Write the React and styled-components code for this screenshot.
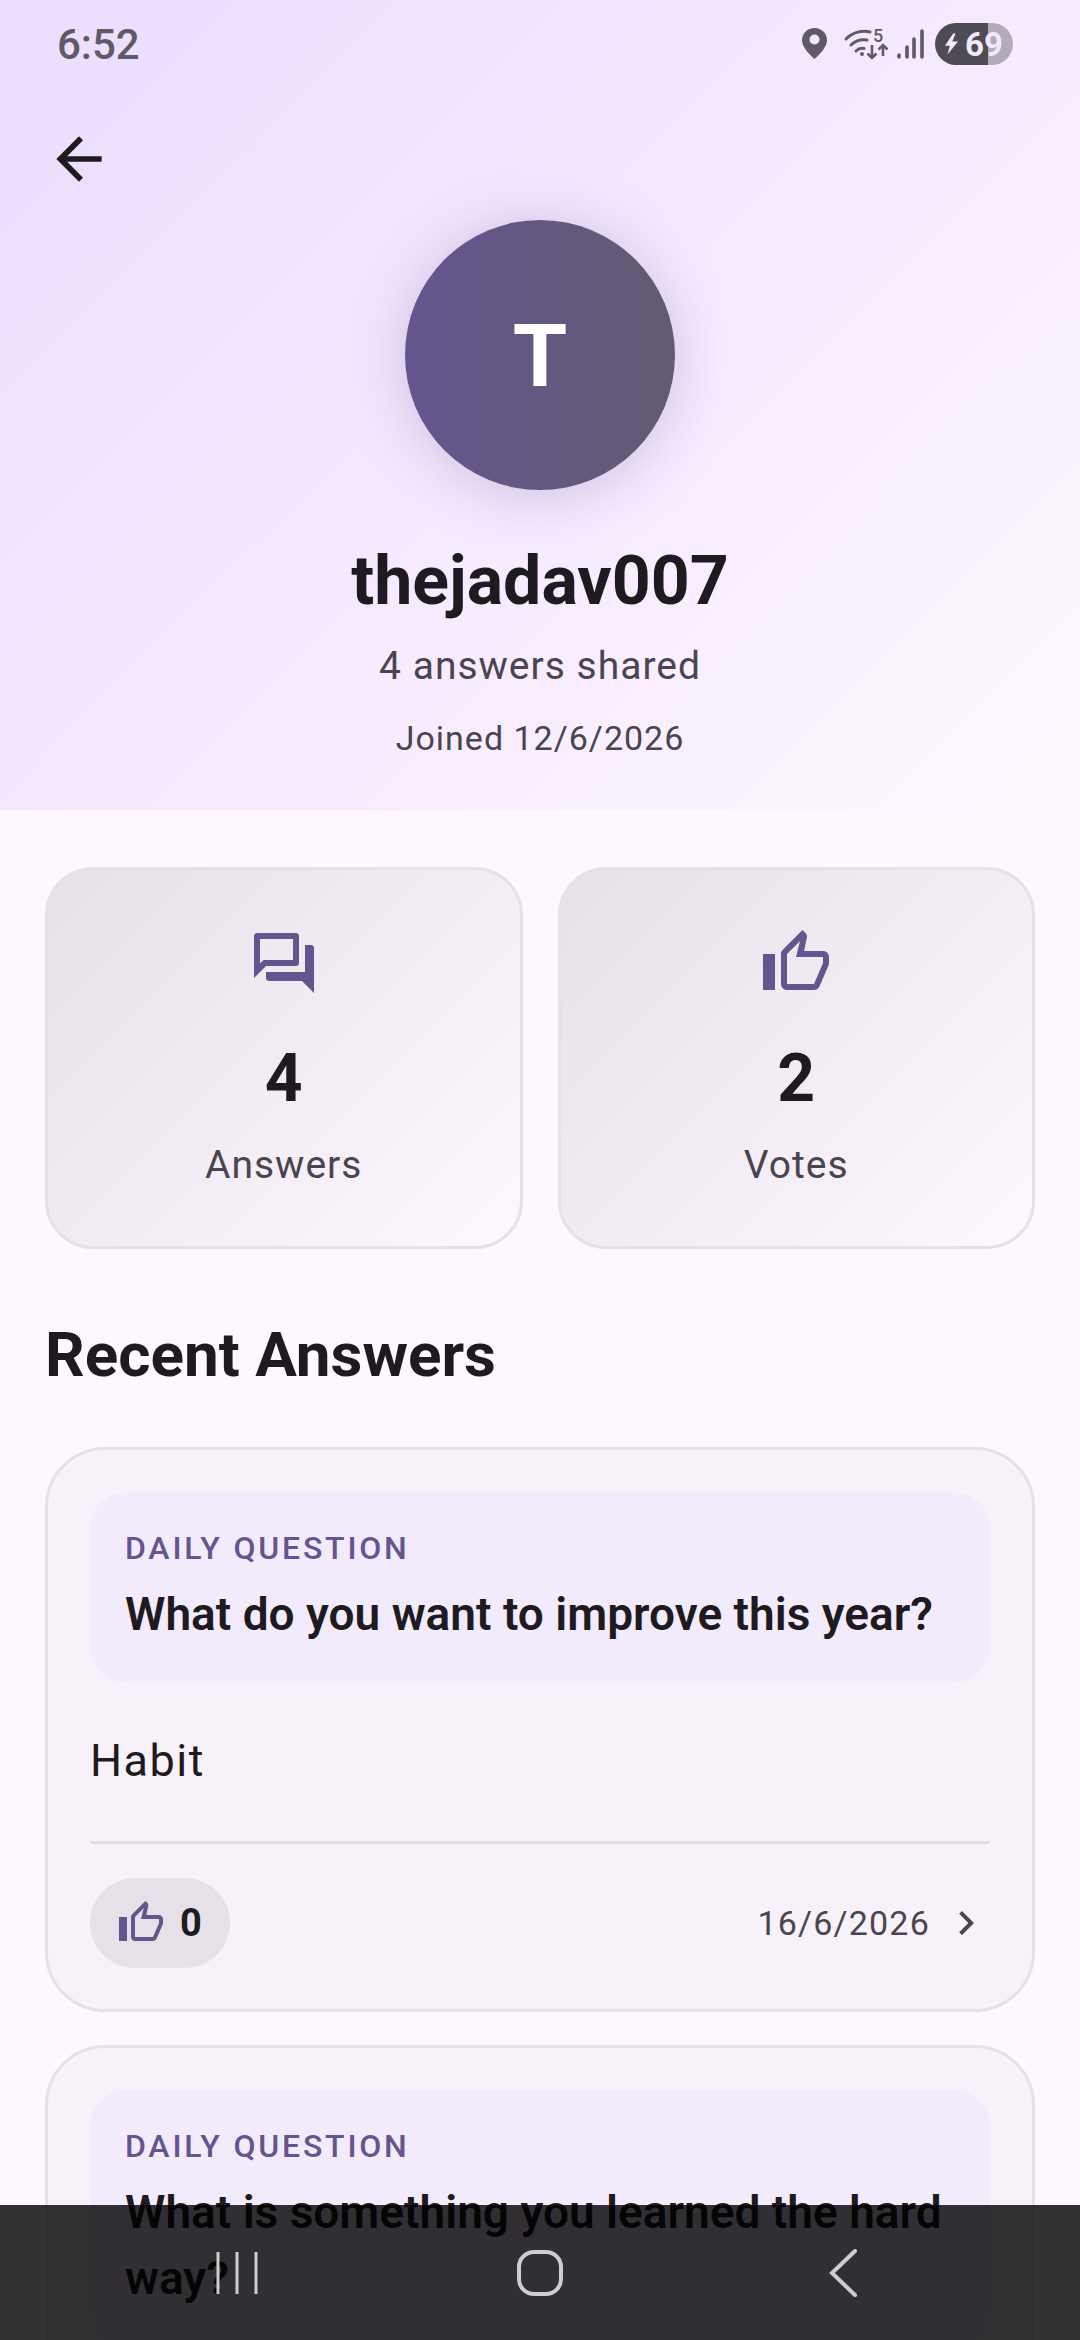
import React from "react";
import styled, { createGlobalStyle } from "styled-components";

const GlobalStyle = createGlobalStyle`
  html, body {
    margin: 0;
    padding: 0;
    background: #fef7ff;
    font-family: Roboto, "Noto Sans", sans-serif;
  }
`;

const answers = [
  { question: "What do you want to improve this year?", answer: "Habit", votes: 0, date: "16/6/2026" },
  { question: "What is something you learned the hard way?" },
];

const ForumIcon = ({ size = 72 }) => (
  <svg width={size} height={size} viewBox="0 0 24 24" fill="#65558f">
    <path d="M15 4v7H5.17L4 12.17V4h11m1-2H3c-.55 0-1 .45-1 1v14l4-4h10c.55 0 1-.45 1-1V3c0-.55-.45-1-1-1zm5 4h-2v9H6v2c0 .55.45 1 1 1h11l4 4V7c0-.55-.45-1-1-1z" />
  </svg>
);

const ThumbIcon = ({ size = 72 }) => (
  <svg width={size} height={size} viewBox="0 0 24 24" fill="#65558f">
    <path d="M9 21h9c.83 0 1.54-.5 1.84-1.22l3.02-7.05c.09-.23.14-.47.14-.73v-2c0-1.1-.9-2-2-2h-6.31l.95-4.57.03-.32c0-.41-.17-.79-.44-1.06L14.17 1 7.58 7.59C7.22 7.95 7 8.45 7 9v10c0 1.1.9 2 2 2zM9 9l4.34-4.34L12 10h9v2l-3 7H9V9zM1 9h4v12H1z" />
  </svg>
);

const BackArrow = () => (
  <svg width="68" height="68" viewBox="0 0 24 24" fill="#1d1b20">
    <path d="M20 11H7.83l5.59-5.59L12 4l-8 8 8 8 1.41-1.41L7.83 13H20v-2z" />
  </svg>
);

const Chevron = () => (
  <svg width="48" height="48" viewBox="0 0 24 24" fill="#49454f">
    <path d="M10 6L8.59 7.41 13.17 12l-4.58 4.59L10 18l6-6z" />
  </svg>
);

const StatusIcons = () => (
  <svg width="125" height="42" viewBox="0 0 125 42" fill="none">
    {/* location pin */}
    <path d="M12.5 5C5.6 5 0 10.4 0 17.2 0 25.6 12.5 36 12.5 36S25 25.6 25 17.2C25 10.4 19.4 5 12.5 5z" fill="#5f5a66" />
    <circle cx="12.5" cy="16.5" r="5" fill="#f2e8fe" />
    {/* wifi arcs */}
    <g stroke="#5f5a66" strokeWidth="3" strokeLinecap="round">
      <path d="M44 16c6-6 15-9 24-7" />
      <path d="M49 22c4-4 10-6 16-5" />
      <path d="M54 28c2-2 5-3 8-2.5" />
    </g>
    <circle cx="60" cy="31" r="2" fill="#5f5a66" />
    <text x="71" y="19" fontFamily="Roboto, sans-serif" fontSize="18" fontWeight="500" fill="#5f5a66">5</text>
    <g stroke="#5f5a66" strokeWidth="2.6">
      <path d="M70 22v13M65.5 30.5l4.5 4.5 4.500-4.500" />
      <path d="M81 33V22M76.5 26.5l4.5-4.500 4.500 4.500" />
    </g>
    {/* signal bars */}
    <g stroke="#5f5a66" strokeWidth="3.6" strokeLinecap="round">
      <path d="M97 32v2" />
      <path d="M105 24v10" />
      <path d="M112 16v18" />
      <path d="M120 8v26" />
    </g>
  </svg>
);

const Battery = () => (
  <BatteryPill>
    <svg width="13" height="22" viewBox="0 0 16 26" fill="#f2e8fe">
      <path d="M10 0L0 15h6l-3 11 13-16H9l4-10z" />
    </svg>
    <BatteryLevel>69</BatteryLevel>
  </BatteryPill>
);

const NavRecents = () => (
  <svg width="44" height="46" viewBox="0 0 44 46" stroke="#cfcdcf" strokeWidth="3">
    <path d="M3 2v42M22 2v42M41 2v42" />
  </svg>
);

const NavHome = () => (
  <svg width="48" height="48" viewBox="0 0 48 48" fill="none" stroke="#cfcdcf" strokeWidth="4">
    <rect x="3" y="3" width="42" height="42" rx="15" />
  </svg>
);

const NavBack = () => (
  <svg width="30" height="48" viewBox="0 0 30 48" fill="none" stroke="#cfcdcf" strokeWidth="4" strokeLinecap="round">
    <path d="M27 2L4 24l23 22" />
  </svg>
);

const AnswerCard = ({ item }) => (
  <Card>
    <QuestionBox>
      <QuestionLabel>DAILY QUESTION</QuestionLabel>
      <QuestionText>{item.question}</QuestionText>
    </QuestionBox>
    {item.answer && (
      <>
        <AnswerText>{item.answer}</AnswerText>
        <Divider />
        <CardFooter>
          <VotePill>
            <ThumbIcon size={48} />
            <VoteCount>{item.votes}</VoteCount>
          </VotePill>
          <DateLink>
            <DateText>{item.date}</DateText>
            <Chevron />
          </DateLink>
        </CardFooter>
      </>
    )}
  </Card>
);

export default function App() {
  return (
    <Screen>
      <GlobalStyle />
      <Header>
        <StatusBar>
          <StatusTime>6:52</StatusTime>
          <StatusRight>
            <StatusIcons />
            <Battery />
          </StatusRight>
        </StatusBar>
        <BackRow>
          <BackArrow />
        </BackRow>
        <Avatar>T</Avatar>
        <UserName>thejadav007</UserName>
        <SubLine>4 answers shared</SubLine>
        <JoinLine>Joined 12/6/2026</JoinLine>
      </Header>

      <StatsRow>
        <StatCard>
          <ForumIcon />
          <StatValue>4</StatValue>
          <StatLabel>Answers</StatLabel>
        </StatCard>
        <StatCard>
          <ThumbIcon />
          <StatValue>2</StatValue>
          <StatLabel>Votes</StatLabel>
        </StatCard>
      </StatsRow>

      <SectionTitle>Recent Answers</SectionTitle>
      <CardList>
        {answers.map((item) => (
          <AnswerCard key={item.question} item={item} />
        ))}
      </CardList>

      <NavBar>
        <NavRecents />
        <NavHome />
        <NavBack />
      </NavBar>
    </Screen>
  );
}

const Screen = styled.div`
  position: relative;
  width: 1080px;
  height: 2340px;
  overflow: hidden;
  background: #fef7ff;
`;

const Header = styled.header`
  height: 810px;
  display: flex;
  flex-direction: column;
  align-items: center;
  background: linear-gradient(135deg, #eaddff 0%, #f4e8ff 45%, #fef7ff 100%);
`;

const StatusBar = styled.div`
  width: 100%;
  height: 88px;
  box-sizing: border-box;
  padding: 0 67px 0 57px;
  display: flex;
  align-items: center;
  justify-content: space-between;
`;

const StatusTime = styled.span`
  font-size: 42px;
  font-weight: 500;
  color: #5f5a66;
`;

const StatusRight = styled.div`
  display: flex;
  align-items: center;
  gap: 8px;
`;

const BatteryPill = styled.div`
  width: 78px;
  height: 42px;
  box-sizing: border-box;
  padding-left: 10px;
  border-radius: 21px;
  display: flex;
  align-items: center;
  gap: 7px;
  background: linear-gradient(90deg, #4f4b54 0 68%, #b3abbb 68% 100%);
`;

const BatteryLevel = styled.span`
  font-size: 33px;
  font-weight: 700;
  color: #f2e8fe;
`;

const BackRow = styled.div`
  width: 100%;
  height: 132px;
  box-sizing: border-box;
  padding: 37px 0 0 45px;
`;

const Avatar = styled.div`
  width: 270px;
  height: 270px;
  flex-shrink: 0;
  border-radius: 50%;
  display: flex;
  align-items: center;
  justify-content: center;
  background: linear-gradient(90deg, #65558f 0%, #625b71 100%);
  box-shadow: 0 6px 60px rgba(101, 85, 143, 0.28);
  font-size: 88px;
  font-weight: 700;
  color: #ffffff;
`;

const UserName = styled.h1`
  margin: 49px 0 0;
  font-size: 68px;
  line-height: 84px;
  font-weight: 700;
  color: #1d1b20;
`;

const SubLine = styled.p`
  margin: 18px 0 0;
  font-size: 39px;
  line-height: 50px;
  letter-spacing: 1px;
  color: #49454f;
`;

const JoinLine = styled.p`
  margin: 25px 0 0;
  font-size: 34px;
  line-height: 44px;
  letter-spacing: 1px;
  color: #49454f;
`;

const StatsRow = styled.section`
  padding: 57px 45px 0;
  display: grid;
  grid-template-columns: 1fr 1fr;
  gap: 35px;
`;

const StatCard = styled.div`
  height: 382px;
  box-sizing: border-box;
  padding-top: 57px;
  border: 3px solid #e6e0e9;
  border-radius: 48px;
  display: flex;
  flex-direction: column;
  align-items: center;
  background: linear-gradient(135deg, #e6e0e9 0%, #fef7ff 100%);
`;

const StatValue = styled.div`
  margin-top: 40px;
  font-size: 66px;
  line-height: 80px;
  font-weight: 700;
  color: #1d1b20;
`;

const StatLabel = styled.div`
  margin-top: 21px;
  font-size: 39px;
  line-height: 50px;
  letter-spacing: 1px;
  color: #49454f;
`;

const SectionTitle = styled.h2`
  margin: 66px 45px 0;
  font-size: 62px;
  line-height: 80px;
  font-weight: 700;
  color: #1d1b20;
`;

const CardList = styled.div`
  margin-top: 52px;
  padding: 0 45px;
  display: flex;
  flex-direction: column;
  gap: 33px;
`;

const Card = styled.article`
  box-sizing: border-box;
  padding: 42px 42px 41px;
  border: 3px solid #e6e0e9;
  border-radius: 60px;
  background: #f7f2fa;
`;

const QuestionBox = styled.div`
  padding: 36px 35px 36px;
  border-radius: 36px;
  background: #f2ebfc;
`;

const QuestionLabel = styled.div`
  font-size: 32px;
  line-height: 40px;
  font-weight: 500;
  letter-spacing: 2.8px;
  color: #65558f;
`;

const QuestionText = styled.div`
  margin-top: 13px;
  font-size: 46px;
  line-height: 66px;
  font-weight: 600;
  color: #1d1b20;
`;

const AnswerText = styled.p`
  margin: 48px 0 0;
  font-size: 45px;
  line-height: 60px;
  letter-spacing: 1.5px;
  color: #1d1b20;
`;

const Divider = styled.div`
  margin-top: 50px;
  height: 3px;
  background: #e2dce5;
`;

const CardFooter = styled.div`
  margin-top: 34px;
  display: flex;
  align-items: center;
  justify-content: space-between;
`;

const VotePill = styled.div`
  width: 140px;
  height: 90px;
  box-sizing: border-box;
  padding-left: 27px;
  border-radius: 45px;
  display: flex;
  align-items: center;
  gap: 15px;
  background: #e6e0e9;
`;

const VoteCount = styled.span`
  font-size: 38px;
  font-weight: 700;
  color: #1d1b20;
`;

const DateLink = styled.div`
  display: flex;
  align-items: center;
  gap: 12px;
`;

const DateText = styled.span`
  font-size: 34px;
  letter-spacing: 1.2px;
  color: #49454f;
`;

const NavBar = styled.nav`
  position: absolute;
  left: 0;
  right: 0;
  bottom: 0;
  height: 135px;
  display: grid;
  grid-template-columns: repeat(3, 303px);
  justify-content: center;
  justify-items: center;
  align-items: center;
  background: rgba(0, 0, 0, 0.8);
`;
